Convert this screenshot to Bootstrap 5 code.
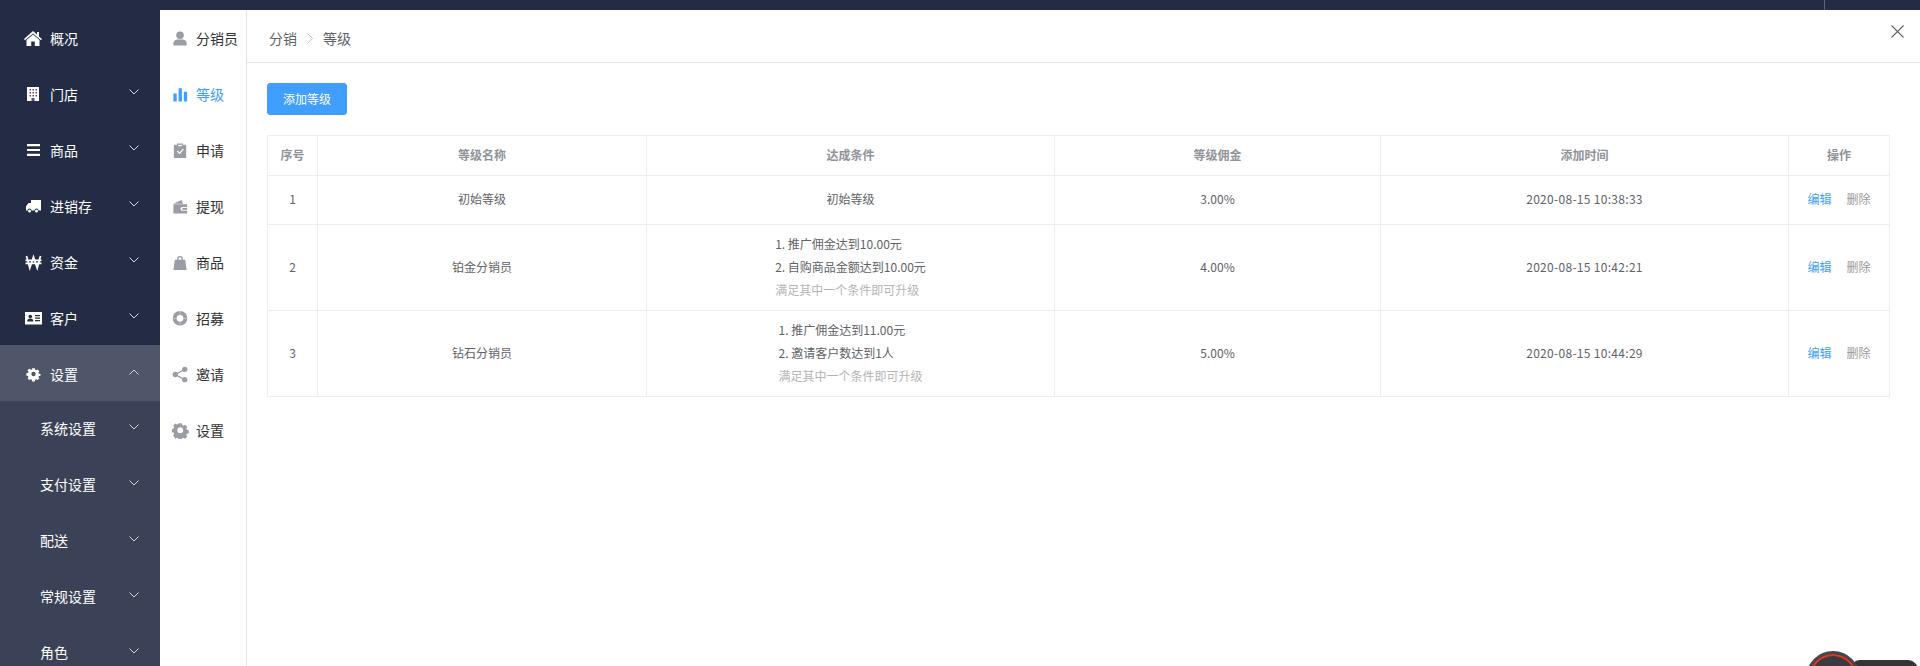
<!DOCTYPE html>
<html lang="zh-CN">
<head>
<meta charset="utf-8">
<title>等级</title>
<link href="https://cdn.jsdelivr.net/npm/bootstrap@5.3.0/dist/css/bootstrap.min.css" rel="stylesheet">
<style>
html,body{height:100%;overflow:hidden}
body{font-family:"Noto Sans CJK SC","Liberation Sans",sans-serif;font-size:12px;color:#606266;background:#fff}
.shell{height:666px;overflow:hidden}
.side-main{width:160px;flex:none;background:#232b45;padding-top:9px;overflow:hidden;color:#fff;font-size:14px}
.side-row{height:56px;padding-left:24px;padding-top:2px;position:relative}
.side-row.is-open{background:#50566a}
.side-ico{width:18px;height:18px;margin-right:8px;flex:none;fill:#fff}
.side-sub{background:#3b4257;height:265px;overflow:hidden}
.sub-row{height:56px;padding-left:40px;padding-bottom:2px;position:relative}
.chev{position:absolute;right:21px;top:24px;width:10px;height:6px;fill:none;stroke:#d5d8e2;stroke-width:1}
.sub-row .chev{top:23px}
.right-col{min-width:0}
.top-strip{height:10px;background:#232b45;flex:none;position:relative}
.top-rule{position:absolute;left:1664px;top:0;width:1px;height:10px;background:#60667a}
.nav-second{width:87px;flex:none;border-right:1px solid #e4e5eb;font-size:14px;color:#303133}
.second-row{height:56px;padding-left:12px}
.second-ico{width:17px;height:17px;margin-right:7px;flex:none;fill:#9a9ca6}
.second-row.is-on{color:#409eff}
.second-row.is-on .second-ico{fill:#409eff}
.crumb-bar{height:53px;border-bottom:1px solid #e4e5eb;padding-left:22px;padding-top:5px;font-size:14px;color:#606266;position:relative}
.crumb-sep{width:6px;height:11px;margin:0 10px;fill:none;stroke:#c0c4cc;stroke-width:1}
.close-x{position:absolute;right:16px;top:15px;width:13px;height:13px;stroke:#606266;stroke-width:1.1;fill:none}
.body-pane{padding:20px 30px 0 20px}
.add-btn{--bs-btn-bg:#409eff;--bs-btn-border-color:#409eff;--bs-btn-font-size:12px;--bs-btn-padding-x:0;--bs-btn-padding-y:0;--bs-btn-border-radius:3px;width:80px;height:32px;line-height:30px;display:block}
.grade-table{margin:20px 0 0;width:1622px;table-layout:fixed;--bs-table-border-color:#ebeef5;--bs-table-color:#606266;font-size:12px;text-align:center}
.grade-table th,.grade-table td{padding:0;vertical-align:middle;border-width:1px}
.grade-table th{color:#909399;font-weight:700;height:40px;padding-bottom:2px}
.row-one td{height:49px;padding-bottom:2px}
.row-more td{height:86px;padding-bottom:2px}
.cond-box{display:inline-block;text-align:left;line-height:23px}
.cond-note{color:#b4b4b4}
.stamp{letter-spacing:.3px}
.act-edit{color:#409eff;text-decoration:none}
.act-del{color:#999;text-decoration:none;margin-left:15px}
.float-clip{position:absolute;left:1760px;top:640px;width:160px;height:26px;overflow:hidden}
.float-circle{position:absolute;left:46px;top:11px;width:54px;height:54px;border-radius:50%;background:#3a3a40;border:3px solid #47474e;box-shadow:inset 0 0 0 2px #e8341c}
.float-pill{position:absolute;left:90px;top:20px;width:68px;height:30px;border-radius:10px;background:#333338}
</style>
</head>
<body>
<div class="shell d-flex">
  <aside class="side-main">
    <div class="side-row d-flex align-items-center"><svg class="side-ico" viewBox="0 0 18 18"><path d="M9 2 0 10l1 1.200L9 4.400l8 6.800 1-1.200-3-2.600V3h-2v2.600z"/><path d="M9 5.600 2.500 11v6h4.700v-4.500h3.600V17h4.700v-6z"/></svg>概况</div>
    <div class="side-row d-flex align-items-center"><svg class="side-ico" viewBox="0 0 18 18"><path d="M3 2h12v14H3z"/><path fill="#6b3f8f" d="M5.500 4H7v1.500H5.500zM8.500 4H10v1.500H8.500zM11.500 4H13v1.500h-1.500zM5.500 7H7v1.500H5.500zM8.500 7H10v1.500H8.500zM11.500 7H13v1.500h-1.500zM5.500 10H7v1.500H5.500zM8.500 10H10v1.500H8.500zM11.500 10H13v1.500h-1.500zM7.500 13h3v3h-3z"/></svg>门店<svg class="chev" viewBox="0 0 10 6"><path d="M.5.500 5 5 9.500.500"/></svg></div>
    <div class="side-row d-flex align-items-center"><svg class="side-ico" viewBox="0 0 18 18"><path d="M3 3h13v2.200H3zM3 7.900h13v2.200H3zM3 12.800h13V15H3z"/></svg>商品<svg class="chev" viewBox="0 0 10 6"><path d="M.5.500 5 5 9.500.500"/></svg></div>
    <div class="side-row d-flex align-items-center"><svg class="side-ico" viewBox="0 0 18 18"><path d="M7 3h10v10.500h-2.500a2 2 0 0 0-4 0H7.500a2 2 0 0 0-4 0H2V9.200L4.500 6H7z"/><circle cx="5.500" cy="14" r="1.500"/><circle cx="12.500" cy="14" r="1.500"/></svg>进销存<svg class="chev" viewBox="0 0 10 6"><path d="M.5.500 5 5 9.500.500"/></svg></div>
    <div class="side-row d-flex align-items-center"><svg class="side-ico" viewBox="0 0 18 18"><path fill="none" stroke="#fff" stroke-width="1.800" d="M2.500 3l3.300 12L9.500 4l3.700 11L16.500 3M1.500 7.300h16M1.500 10.300h16"/></svg>资金<svg class="chev" viewBox="0 0 10 6"><path d="M.5.500 5 5 9.500.500"/></svg></div>
    <div class="side-row d-flex align-items-center"><svg class="side-ico" viewBox="0 0 18 18"><path d="M1 3h17v12.500H1z"/><circle cx="6.300" cy="7.500" r="1.800" fill="#232b45"/><path fill="#232b45" d="M3.200 12.500c0-2 1-3 3.100-3s3.100 1 3.100 3zM11 6h5v1.200h-5zM11 8.500h5v1.200h-5zM11 11h5v1.200h-5z"/></svg>客户<svg class="chev" viewBox="0 0 10 6"><path d="M.5.500 5 5 9.500.500"/></svg></div>
    <div class="side-row is-open d-flex align-items-center"><svg class="side-ico" viewBox="0 0 18 18"><path d="M7.400 2h3.200l.4 2 1.300.6 1.800-1 2 2-1.100 1.700.6 1.400 2 .4v1.800l-2 .4-.6 1.400 1.100 1.700-2 2-1.800-1-1.300.6-.4 2H7.400l-.4-2-1.300-.6-1.800 1-2-2 1.100-1.700-.6-1.400-2-.4V8.100l2-.4.600-1.400-1.100-1.700 2-2 1.800 1L7 4z" transform="translate(2 1.500) scale(.83)"/><circle cx="9.500" cy="9" r="2.200" fill="#50566a"/></svg>设置<svg class="chev" viewBox="0 0 10 6"><path d="M.5 5.500 5 1l4.500 4.500"/></svg></div>
    <div class="side-sub">
      <div class="sub-row d-flex align-items-center">系统设置<svg class="chev" viewBox="0 0 10 6"><path d="M.5.500 5 5 9.500.500"/></svg></div>
      <div class="sub-row d-flex align-items-center">支付设置<svg class="chev" viewBox="0 0 10 6"><path d="M.5.500 5 5 9.500.500"/></svg></div>
      <div class="sub-row d-flex align-items-center">配送<svg class="chev" viewBox="0 0 10 6"><path d="M.5.500 5 5 9.500.500"/></svg></div>
      <div class="sub-row d-flex align-items-center">常规设置<svg class="chev" viewBox="0 0 10 6"><path d="M.5.500 5 5 9.500.500"/></svg></div>
      <div class="sub-row d-flex align-items-center">角色<svg class="chev" viewBox="0 0 10 6"><path d="M.5.500 5 5 9.500.500"/></svg></div>
    </div>
  </aside>
  <div class="right-col flex-grow-1 d-flex flex-column">
    <div class="top-strip"><span class="top-rule"></span></div>
    <div class="d-flex flex-grow-1">
      <nav class="nav-second">
        <div class="second-row d-flex align-items-center"><svg class="second-ico" viewBox="0 0 18 18"><circle cx="8.500" cy="5.500" r="4"/><path d="M1.500 16.500v-2.500c0-2.500 2-4 4-4h6c2 0 4 1.500 4 4v2.500z"/></svg>分销员</div>
        <div class="second-row is-on d-flex align-items-center"><svg class="second-ico" viewBox="0 0 18 18"><path d="M1.500 8H5v8.500H1.500zM7 2.500h3.500v14H7zM12.500 6H16v10.500h-3.500z"/></svg>等级</div>
        <div class="second-row d-flex align-items-center"><svg class="second-ico" viewBox="0 0 18 18"><path d="M2 3h3.500V1.500h6V3H15v14H2z"/><path d="M5.500 9.500 8 12l4-4.500" fill="none" stroke="#fff" stroke-width="1.300"/><path d="M6.500 3h4v1.500h-4z" fill="#fff"/></svg>申请</div>
        <div class="second-row d-flex align-items-center"><svg class="second-ico" viewBox="0 0 18 18"><path d="M1.500 6 10 2l1.800 4zM1.500 6.500H16v3h-5a2 2 0 0 0 0 4h5v3H1.500z"/><path d="M11 10.500h5v2h-5z"/></svg>提现</div>
        <div class="second-row d-flex align-items-center"><svg class="second-ico" viewBox="0 0 18 18"><path d="M1.500 17 3 6h2.500V5a3 3 0 0 1 6 0v1H14l1.500 11zM7 6h3V5a1.500 1.500 0 0 0-3 0z"/></svg>商品</div>
        <div class="second-row d-flex align-items-center"><svg class="second-ico" viewBox="0 0 18 18"><path fill-rule="evenodd" d="M8.500 1a7.800 7.800 0 1 1 0 15.600A7.800 7.800 0 0 1 8.500 1zm0 4.200a3.600 3.600 0 1 0 0 7.200 3.600 3.600 0 0 0 0-7.200z"/><path d="M8.500 1v4M8.500 12.500v4M.8 8.800h4M12.200 8.800h4" stroke="#fff" stroke-width=".9" opacity=".55"/></svg>招募</div>
        <div class="second-row d-flex align-items-center"><svg class="second-ico" viewBox="0 0 18 18"><circle cx="3.500" cy="9" r="2.800"/><circle cx="13.500" cy="3.500" r="2.800"/><circle cx="13.500" cy="14.500" r="2.800"/><path d="M3.500 9l10-5.500M3.500 9l10 5.500" stroke="#9a9ca6" stroke-width="1.400"/></svg>邀请</div>
        <div class="second-row d-flex align-items-center"><svg class="second-ico" viewBox="0 0 18 18"><path fill-rule="evenodd" d="M7.100.5h3.800l.5 2.300 1.500.7 2-1.200 2.600 2.600-1.200 2 .7 1.500 2.300.5v3.700l-2.300.5-.7 1.500 1.200 2-2.600 2.600-2-1.200-1.500.7-.5 2.300H7.100l-.5-2.300-1.500-.7-2 1.200L.5 15.200l1.200-2-.7-1.500-2.300-.5V7.500l2.300-.5.700-1.500-1.200-2L3.100 1l2 1.200 1.500-.7zM9 5.500a3.500 3.500 0 1 0 0 7 3.500 3.500 0 0 0 0-7z" transform="translate(.8 .8) scale(.88)"/></svg>设置</div>
      </nav>
      <main class="flex-grow-1">
        <div class="crumb-bar d-flex align-items-center">
          <span>分销</span><svg class="crumb-sep" viewBox="0 0 6 11"><path d="M.5.500 5.500 5.500.5 10.500"/></svg><span>等级</span>
          <svg class="close-x" viewBox="0 0 13 13"><path d="M.5.500l12 12M12.500.500l-12 12"/></svg>
        </div>
        <div class="body-pane">
          <button type="button" class="btn btn-primary add-btn">添加等级</button>
          <table class="table table-bordered grade-table">
            <colgroup><col style="width:50px"><col style="width:329px"><col style="width:408px"><col style="width:326px"><col style="width:408px"><col style="width:101px"></colgroup>
            <thead><tr><th>序号</th><th>等级名称</th><th>达成条件</th><th>等级佣金</th><th>添加时间</th><th>操作</th></tr></thead>
            <tbody>
              <tr class="row-one"><td>1</td><td>初始等级</td><td>初始等级</td><td>3.00%</td><td class="stamp">2020-08-15 10:38:33</td><td><a class="act-edit" href="#">编辑</a><a class="act-del" href="#">删除</a></td></tr>
              <tr class="row-more"><td>2</td><td>铂金分销员</td><td><div class="cond-box"><div>1. 推广佣金达到10.00元</div><div>2. 自购商品金额达到10.00元</div><div class="cond-note">满足其中一个条件即可升级</div></div></td><td>4.00%</td><td class="stamp">2020-08-15 10:42:21</td><td><a class="act-edit" href="#">编辑</a><a class="act-del" href="#">删除</a></td></tr>
              <tr class="row-more"><td>3</td><td>钻石分销员</td><td><div class="cond-box"><div>1. 推广佣金达到11.00元</div><div>2. 邀请客户数达到1人</div><div class="cond-note">满足其中一个条件即可升级</div></div></td><td>5.00%</td><td class="stamp">2020-08-15 10:44:29</td><td><a class="act-edit" href="#">编辑</a><a class="act-del" href="#">删除</a></td></tr>
            </tbody>
          </table>
        </div>
      </main>
    </div>
  </div>
</div>
<div class="float-clip"><div class="float-pill"></div><div class="float-circle"></div></div>
<script src="https://cdn.jsdelivr.net/npm/bootstrap@5.3.0/dist/js/bootstrap.bundle.min.js"></script>
</body>
</html>
